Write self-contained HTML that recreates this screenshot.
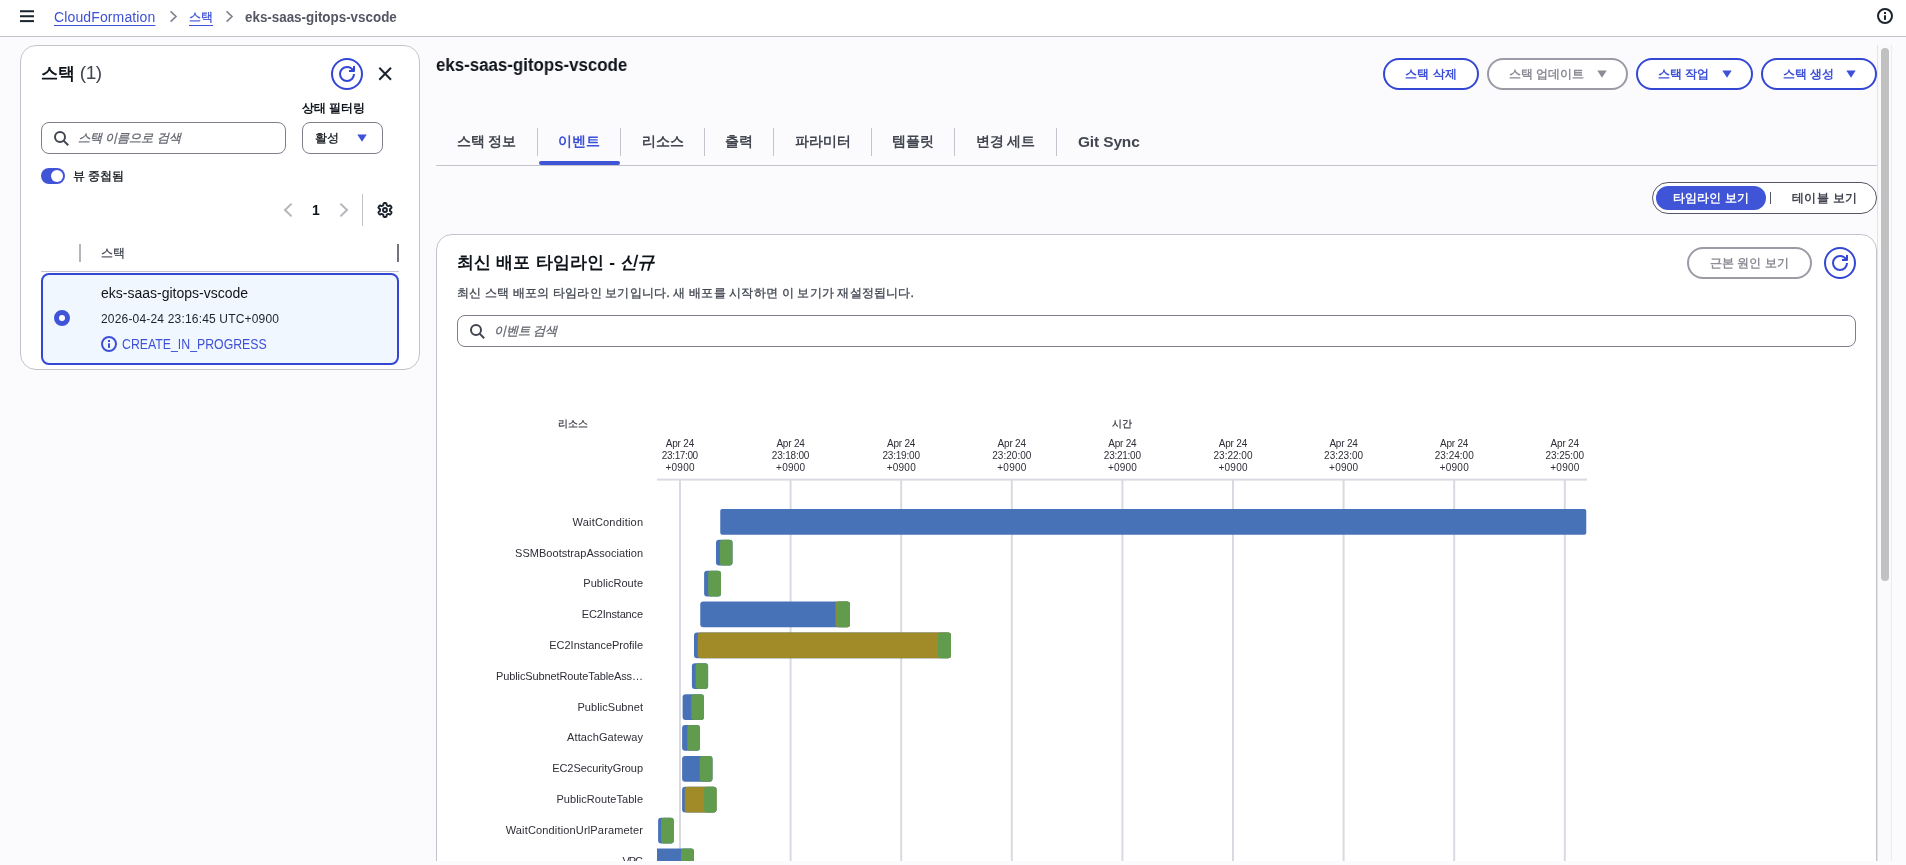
<!DOCTYPE html>
<html lang="ko">
<head>
<meta charset="utf-8">
<title>CloudFormation - eks-saas-gitops-vscode</title>
<style>
*{box-sizing:border-box;margin:0;padding:0}
html,body{width:1906px;height:865px;overflow:hidden}
body{position:relative;background:#fbfbfd;font-family:"Liberation Sans",sans-serif;font-size:14px;color:#0f141a;-webkit-font-smoothing:antialiased}
#root{position:absolute;left:0;top:0;width:1906px;height:865px;will-change:transform}
.abs{position:absolute}
.t{position:absolute;white-space:nowrap;line-height:20px}
svg{position:absolute;overflow:visible}
.blue{color:#3d51d8}
.b{font-weight:bold}
.sx{transform-origin:0 50%}
.k,.bt{font-size:12px}
.k,.k2,.ks{-webkit-text-stroke:0.3px currentColor}
.b.k{-webkit-text-stroke:0}
.k2{font-size:12.4px}

/* top bar */
#top{left:0;top:0;width:1906px;height:37px;background:#fff;border-bottom:1px solid #c3c3cc}
.crumb{font-size:14px;top:7px}
.crumb.link{color:#3d51d8;text-decoration:underline;text-underline-offset:3px;text-decoration-thickness:1px}

/* left panel */
#side{left:20px;top:45px;width:400px;height:325px;background:#fff;border:1px solid #c3c3cc;border-radius:16px}
.input{background:#fff;border:1px solid #7d7f8a;border-radius:8px;height:32px}
.ph{color:#656871;font-style:italic}
.iconbtn{border:2px solid #3347d4;border-radius:16px;width:32px;height:32px;background:#fff}

/* main */
.pill{height:32px;border-radius:16px;border:2px solid #3347d4;background:#fff;color:#3d51d8;font-weight:bold}
.pill.dis{border-color:#9b9ba5;color:#8c8c94}
.tab{position:absolute;top:131px;height:20px;line-height:20px;font-weight:bold;color:#424650;text-align:center;white-space:nowrap}
.tdiv{position:absolute;top:128px;width:1px;height:28px;background:#c3c3cc}
#card{left:436px;top:234px;width:1441px;height:660px;background:#fff;border:1px solid #c3c3cc;border-radius:16px}
</style>
</head>
<body>
<div id="root">

<!-- ===== top bar ===== -->
<div id="top" class="abs"></div>
<svg style="left:20px;top:10px" width="14" height="13" viewBox="0 0 14 13"><g fill="#1b232d"><rect x="0" y="0.25" width="14" height="2"/><rect x="0" y="5.25" width="14" height="2"/><rect x="0" y="10.1" width="14" height="2"/></g></svg>
<div class="t crumb link" style="left:54px;letter-spacing:0.13px">CloudFormation</div>
<svg style="left:168px;top:10px" width="12" height="13" viewBox="0 0 12 13"><path d="M2.6 1.4 L8 6.5 L2.6 11.6" fill="none" stroke="#7f828c" stroke-width="1.6"/></svg>
<div class="t crumb link ks" style="left:189px;top:6.5px;font-size:12px;text-underline-offset:3.5px">스택</div>
<svg style="left:224px;top:10px" width="12" height="13" viewBox="0 0 12 13"><path d="M2.6 1.4 L8 6.5 L2.6 11.6" fill="none" stroke="#7f828c" stroke-width="1.6"/></svg>
<div class="t crumb b sx" style="left:245px;color:#545763;transform:scaleX(0.956)">eks-saas-gitops-vscode</div>
<svg style="left:1877px;top:8px" width="16" height="16" viewBox="0 0 16 16"><circle cx="8" cy="8" r="7" fill="none" stroke="#1b232d" stroke-width="2"/><rect x="7" y="4" width="2" height="2" fill="#1b232d"/><rect x="7" y="7.3" width="2" height="4.6" fill="#1b232d"/></svg>

<!-- ===== left panel ===== -->
<div id="side" class="abs"></div>
<div class="t" style="left:41px;top:61px;line-height:24px;font-size:17.4px"><span class="b">스택</span> <span style="color:#424650;font-size:19px;letter-spacing:-0.5px">(1)</span></div>
<div class="abs iconbtn" style="left:331px;top:58px"></div>
<svg style="left:339px;top:66px" width="16" height="16" viewBox="0 0 16 16" fill="none" stroke="#3347d4" stroke-width="2" stroke-linejoin="round"><path d="M15 8c0 3.87-3.13 7-7 7s-7-3.13-7-7 3.13-7 7-7c2.79 0 5.2 1.63 6.33 4"/><path d="M15 0v5h-5"/></svg>
<svg style="left:377px;top:66px" width="16" height="16" viewBox="0 0 16 16" fill="none" stroke="#1b232d" stroke-width="2"><path d="M2.3 1.8 L14 13.7 M14 1.8 L2.3 13.7"/></svg>

<div class="t b k" style="left:302px;top:98px">상태 필터링</div>
<div class="abs input" style="left:41px;top:122px;width:245px"></div>
<svg style="left:54px;top:131px" width="16" height="16" viewBox="0 0 16 16" fill="none" stroke="#424650" stroke-width="2"><circle cx="6" cy="6" r="5"/><path d="M9.6 9.6 L14.2 14.2"/></svg>
<div class="t ph k2" style="left:78px;top:128px;font-size:12.3px">스택 이름으로 검색</div>
<div class="abs input" style="left:302px;top:122px;width:81px"></div>
<div class="t k" style="left:315px;top:128px">활성</div>
<svg style="left:357px;top:134px" width="10" height="8" viewBox="0 0 10 8"><path d="M0.3 0.4 H9.7 L5 7.8 Z" fill="#3d51d8"/></svg>

<div class="abs" style="left:41px;top:168px;width:24px;height:16px;border-radius:8px;background:#4054d7"></div>
<div class="abs" style="left:51px;top:170px;width:12px;height:12px;border-radius:6px;background:#fff"></div>
<div class="t k" style="left:73px;top:166px">뷰 중첩됨</div>

<svg style="left:283px;top:202px" width="10" height="16" viewBox="0 0 10 16" fill="none" stroke="#b4b4bb" stroke-width="2"><path d="M8.6 1.6 L2 8 L8.6 14.4"/></svg>
<div class="t b" style="left:312px;top:200px;color:#0f141a">1</div>
<svg style="left:339px;top:202px" width="10" height="16" viewBox="0 0 10 16" fill="none" stroke="#b4b4bb" stroke-width="2"><path d="M1.4 1.6 L8 8 L1.4 14.4"/></svg>
<div class="abs" style="left:362px;top:194px;width:1px;height:32px;background:#c3c3cc"></div>
<svg id="gear" style="left:377px;top:202px" width="16" height="16" viewBox="0 0 16 16" fill="none" stroke="#1b232d" stroke-width="1.9" stroke-linejoin="round"><path d="M13.00 8.00 L13.00 7.78 L12.98 7.56 L12.96 7.35 L12.94 7.13 L13.22 6.84 L13.80 6.45 L14.34 6.00 L14.56 5.61 L14.47 5.32 L14.34 5.04 L14.21 4.77 L14.06 4.50 L13.90 4.24 L13.73 3.98 L13.55 3.74 L13.35 3.51 L12.90 3.51 L12.24 3.76 L11.62 4.05 L11.22 4.16 L11.04 4.03 L10.87 3.90 L10.69 3.78 L10.50 3.67 L10.31 3.56 L10.11 3.47 L9.91 3.38 L9.72 3.29 L9.61 2.90 L9.55 2.20 L9.44 1.51 L9.21 1.12 L8.91 1.06 L8.61 1.03 L8.31 1.01 L8.00 1.00 L7.69 1.01 L7.39 1.03 L7.09 1.06 L6.79 1.12 L6.56 1.51 L6.45 2.20 L6.39 2.90 L6.28 3.29 L6.09 3.38 L5.89 3.47 L5.69 3.56 L5.50 3.67 L5.31 3.78 L5.13 3.90 L4.96 4.03 L4.78 4.16 L4.38 4.05 L3.76 3.76 L3.10 3.51 L2.65 3.51 L2.45 3.74 L2.27 3.98 L2.10 4.24 L1.94 4.50 L1.79 4.77 L1.66 5.04 L1.53 5.32 L1.44 5.61 L1.66 6.00 L2.20 6.45 L2.78 6.84 L3.06 7.13 L3.04 7.35 L3.02 7.56 L3.00 7.78 L3.00 8.00 L3.00 8.22 L3.02 8.44 L3.04 8.65 L3.06 8.87 L2.78 9.16 L2.20 9.55 L1.66 10.00 L1.44 10.39 L1.53 10.68 L1.66 10.96 L1.79 11.23 L1.94 11.50 L2.10 11.76 L2.27 12.02 L2.45 12.26 L2.65 12.49 L3.10 12.49 L3.76 12.24 L4.38 11.95 L4.78 11.84 L4.96 11.97 L5.13 12.10 L5.31 12.22 L5.50 12.33 L5.69 12.44 L5.89 12.53 L6.09 12.62 L6.28 12.71 L6.39 13.10 L6.45 13.80 L6.56 14.49 L6.79 14.88 L7.09 14.94 L7.39 14.97 L7.69 14.99 L8.00 15.00 L8.31 14.99 L8.61 14.97 L8.91 14.94 L9.21 14.88 L9.44 14.49 L9.55 13.80 L9.61 13.10 L9.72 12.71 L9.91 12.62 L10.11 12.53 L10.31 12.44 L10.50 12.33 L10.69 12.22 L10.87 12.10 L11.04 11.97 L11.22 11.84 L11.62 11.95 L12.24 12.24 L12.90 12.49 L13.35 12.49 L13.55 12.26 L13.73 12.02 L13.90 11.76 L14.06 11.50 L14.21 11.23 L14.34 10.96 L14.47 10.68 L14.56 10.39 L14.34 10.00 L13.80 9.55 L13.22 9.16 L12.94 8.87 L12.96 8.65 L12.98 8.44 L13.00 8.22 Z"/><circle cx="8" cy="8" r="2"/></svg>

<div class="abs" style="left:79px;top:244px;width:2px;height:18px;background:#b4b4bb"></div>
<div class="t k" style="left:101px;top:243px;color:#424650">스택</div>
<div class="abs" style="left:397px;top:244px;width:2px;height:18px;background:#72747e"></div>
<div class="abs" style="left:41px;top:271px;width:358px;height:1px;background:#c3c3cc"></div>
<div class="abs" style="left:41px;top:272.5px;width:358px;height:92px;border:2px solid #3347d4;border-radius:8px;background:#f1f7fe"></div>
<div class="abs" style="left:54px;top:310px;width:16px;height:16px;border-radius:8px;border:5px solid #4054d7;background:#fff"></div>
<div class="t" style="left:101px;top:283px">eks-saas-gitops-vscode</div>
<div class="t" style="left:101px;top:308.5px;font-size:12px;letter-spacing:0.18px;color:#1b232d">2026-04-24 23:16:45 UTC+0900</div>
<svg style="left:101px;top:336px" width="16" height="16" viewBox="0 0 16 16"><circle cx="8" cy="8" r="7" fill="none" stroke="#3d51d8" stroke-width="2"/><rect x="7" y="4" width="2" height="2" fill="#3d51d8"/><rect x="7" y="7.3" width="2" height="4.6" fill="#3d51d8"/></svg>
<div class="t blue sx" style="left:122px;top:334px;font-size:14px;transform:scaleX(0.879)">CREATE_IN_PROGRESS</div>


<!-- ===== main header ===== -->
<div class="t b sx" style="left:436px;top:52.8px;font-size:18px;line-height:24px;transform:scaleX(0.9375)">eks-saas-gitops-vscode</div>

<div class="abs pill" style="left:1383px;top:58px;width:96px"></div>
<div class="t b blue bt" style="left:1383px;top:64px;width:96px;text-align:center">스택 삭제</div>

<div class="abs pill dis" style="left:1487px;top:58px;width:141px"></div>
<div class="t b bt" style="left:1509px;top:64px;color:#8c8c94">스택 업데이트</div>
<svg style="left:1597px;top:70px" width="10" height="8" viewBox="0 0 10 8"><path d="M0.3 0.4 H9.7 L5 7.8 Z" fill="#8c8c94"/></svg>

<div class="abs pill" style="left:1636px;top:58px;width:117px"></div>
<div class="t b blue bt" style="left:1658px;top:64px">스택 작업</div>
<svg style="left:1722px;top:70px" width="10" height="8" viewBox="0 0 10 8"><path d="M0.3 0.4 H9.7 L5 7.8 Z" fill="#3d51d8"/></svg>

<div class="abs pill" style="left:1761px;top:58px;width:116px"></div>
<div class="t b blue bt" style="left:1783px;top:64px">스택 생성</div>
<svg style="left:1846px;top:70px" width="10" height="8" viewBox="0 0 10 8"><path d="M0.3 0.4 H9.7 L5 7.8 Z" fill="#3d51d8"/></svg>

<!-- ===== tabs ===== -->
<div class="abs" style="left:436px;top:165px;width:1441px;height:1px;background:#c3c3cc"></div>
<div class="tab" style="left:436px;width:101px">스택 정보</div>
<div class="tdiv" style="left:537px"></div>
<div class="tab" style="left:537px;width:83px;color:#3d51d8">이벤트</div>
<div class="abs" style="left:539px;top:161px;width:81px;height:4px;border-radius:2px;background:#4054d7"></div>
<div class="tdiv" style="left:620px"></div>
<div class="tab" style="left:621px;width:83px">리소스</div>
<div class="tdiv" style="left:704px"></div>
<div class="tab" style="left:705px;width:68px">출력</div>
<div class="tdiv" style="left:773px"></div>
<div class="tab" style="left:774px;width:97px">파라미터</div>
<div class="tdiv" style="left:871px"></div>
<div class="tab" style="left:872px;width:82px">템플릿</div>
<div class="tdiv" style="left:954px"></div>
<div class="tab" style="left:955px;width:101px">변경 세트</div>
<div class="tdiv" style="left:1056px"></div>
<div class="tab" style="left:1078px;top:132.3px;font-size:15.4px;letter-spacing:-0.1px">Git Sync</div>

<!-- ===== segmented control ===== -->
<div class="abs" style="left:1652px;top:182px;width:225px;height:32px;border:1px solid #545763;border-radius:16px;background:#fff"></div>
<div class="abs" style="left:1656px;top:186px;width:110px;height:24px;border-radius:12px;background:#4054d7"></div>
<div class="t b bt" style="left:1656px;top:188px;width:110px;text-align:center;color:#fff">타임라인 보기</div>
<div class="abs" style="left:1770px;top:192px;width:1px;height:12px;background:#545763"></div>
<div class="t b bt" style="left:1792px;top:188px;letter-spacing:0.3px;color:#424650">테이블 보기</div>

<!-- ===== card ===== -->
<div id="card" class="abs"></div>
<div class="t b" style="left:457px;top:250px;font-size:17.4px;letter-spacing:0.15px;line-height:24px">최신 배포 타임라인 - <i>신규</i></div>
<div class="t k2" style="left:457px;top:283px;font-size:12.4px;letter-spacing:0.17px;color:#424650">최신 스택 배포의 타임라인 보기입니다. 새 배포를 시작하면 이 보기가 재설정됩니다.</div>
<div class="abs pill dis" style="left:1687px;top:247px;width:125px"></div>
<div class="t b bt" style="left:1687px;top:253px;width:125px;text-align:center;color:#8c8c94">근본 원인 보기</div>
<div class="abs iconbtn" style="left:1824px;top:247px"></div>
<svg style="left:1832px;top:255px" width="16" height="16" viewBox="0 0 16 16" fill="none" stroke="#3347d4" stroke-width="2" stroke-linejoin="round"><path d="M15 8c0 3.87-3.13 7-7 7s-7-3.13-7-7 3.13-7 7-7c2.790 0 5.2 1.63 6.33 4"/><path d="M15 0v5h-5"/></svg>
<div class="abs input" style="left:457px;top:315px;width:1399px"></div>
<svg style="left:470px;top:324px" width="16" height="16" viewBox="0 0 16 16" fill="none" stroke="#424650" stroke-width="2"><circle cx="6" cy="6" r="5"/><path d="M9.6 9.6 L14.2 14.2"/></svg>
<div class="t ph k2" style="left:494px;top:321px">이벤트 검색</div>

<!-- CHART-START -->
<svg id="chart" style="left:436px;top:400px" width="1200" height="461" viewBox="436 400 1200 461">
<defs><clipPath id="plot"><rect x="657" y="480" width="940" height="381"/></clipPath><clipPath id="lab"><rect x="436" y="480" width="220" height="381"/></clipPath></defs>
<g fill="#d9d9e2">
<rect x="679.00" y="479" width="2" height="382"/>
<rect x="789.60" y="479" width="2" height="382"/>
<rect x="900.20" y="479" width="2" height="382"/>
<rect x="1010.80" y="479" width="2" height="382"/>
<rect x="1121.40" y="479" width="2" height="382"/>
<rect x="1232.00" y="479" width="2" height="382"/>
<rect x="1342.60" y="479" width="2" height="382"/>
<rect x="1453.20" y="479" width="2" height="382"/>
<rect x="1563.80" y="479" width="2" height="382"/>
<rect x="657" y="478.6" width="930" height="2"/>
</g>
<g font-family="Liberation Sans, sans-serif" font-size="10" fill="#2e2e38" text-anchor="middle">
<text x="680.0" y="446.7" textLength="28.4">Apr 24</text><text x="680.0" y="458.7" textLength="36.3">23:17:00</text><text x="680.0" y="470.6" textLength="29">+0900</text>
<text x="790.6" y="446.7" textLength="28.4">Apr 24</text><text x="790.6" y="458.7" textLength="37.6">23:18:00</text><text x="790.6" y="470.6" textLength="29">+0900</text>
<text x="901.2" y="446.7" textLength="28.4">Apr 24</text><text x="901.2" y="458.7" textLength="37.5">23:19:00</text><text x="901.2" y="470.6" textLength="29">+0900</text>
<text x="1011.8" y="446.7" textLength="28.4">Apr 24</text><text x="1011.8" y="458.7" textLength="39">23:20:00</text><text x="1011.8" y="470.6" textLength="29">+0900</text>
<text x="1122.4" y="446.7" textLength="28.4">Apr 24</text><text x="1122.4" y="458.7" textLength="37.1">23:21:00</text><text x="1122.4" y="470.6" textLength="29">+0900</text>
<text x="1233.0" y="446.7" textLength="28.4">Apr 24</text><text x="1233.0" y="458.7" textLength="39">23:22:00</text><text x="1233.0" y="470.6" textLength="29">+0900</text>
<text x="1343.6" y="446.7" textLength="28.4">Apr 24</text><text x="1343.6" y="458.7" textLength="39">23:23:00</text><text x="1343.6" y="470.6" textLength="29">+0900</text>
<text x="1454.2" y="446.7" textLength="28.4">Apr 24</text><text x="1454.2" y="458.7" textLength="39.1">23:24:00</text><text x="1454.2" y="470.6" textLength="29">+0900</text>
<text x="1564.8" y="446.7" textLength="28.4">Apr 24</text><text x="1564.8" y="458.7" textLength="38.4">23:25:00</text><text x="1564.8" y="470.6" textLength="29">+0900</text>
</g>
<g font-family="Liberation Sans, sans-serif" font-size="10.4" fill="#2e2e38" stroke="#2e2e38" stroke-width="0.2"><text x="557.5" y="427.4">리소스</text><text x="1121.7" y="427.4" text-anchor="middle">시간</text></g>
<g clip-path="url(#plot)">
<rect x="720.25" y="509.00" width="866.00" height="25.7" rx="2" fill="#4872b8"/>
<rect x="716.00" y="539.87" width="16.50" height="25.7" rx="3" fill="#4872b8"/>
<rect x="720.00" y="539.87" width="12.50" height="25.7" rx="3" fill="#619b4e"/>
<rect x="704.10" y="570.74" width="16.90" height="25.7" rx="3" fill="#4872b8"/>
<rect x="708.10" y="570.74" width="12.90" height="25.7" rx="3" fill="#619b4e"/>
<rect x="700.25" y="601.61" width="149.75" height="25.7" rx="3" fill="#4872b8"/>
<rect x="835.60" y="601.61" width="14.40" height="25.7" rx="3" fill="#a08b28"/>
<rect x="836.50" y="601.61" width="13.50" height="25.7" rx="3" fill="#619b4e"/>
<rect x="694.00" y="632.48" width="257.00" height="25.7" rx="3" fill="#4872b8"/>
<rect x="697.75" y="632.48" width="253.25" height="25.7" rx="3" fill="#a08b28"/>
<rect x="938.00" y="632.48" width="13.00" height="25.7" rx="3" fill="#619b4e"/>
<rect x="691.90" y="663.35" width="16.20" height="25.7" rx="3" fill="#4872b8"/>
<rect x="695.60" y="663.35" width="12.50" height="25.7" rx="3" fill="#619b4e"/>
<rect x="682.60" y="694.22" width="21.40" height="25.7" rx="3" fill="#4872b8"/>
<rect x="691.25" y="694.22" width="12.75" height="25.7" rx="3" fill="#619b4e"/>
<rect x="682.10" y="725.09" width="17.90" height="25.7" rx="3" fill="#4872b8"/>
<rect x="687.25" y="725.09" width="12.75" height="25.7" rx="3" fill="#619b4e"/>
<rect x="682.10" y="755.96" width="30.40" height="25.7" rx="3" fill="#4872b8"/>
<rect x="699.75" y="755.96" width="12.75" height="25.7" rx="3" fill="#619b4e"/>
<rect x="682.10" y="786.83" width="34.40" height="25.7" rx="3" fill="#4872b8"/>
<rect x="684.75" y="786.83" width="31.75" height="25.7" rx="3" fill="#a08b28"/>
<rect x="704.00" y="786.83" width="12.50" height="25.7" rx="3" fill="#619b4e"/>
<rect x="658.10" y="817.70" width="15.65" height="25.7" rx="3" fill="#4872b8"/>
<rect x="661.00" y="817.70" width="12.75" height="25.7" rx="3" fill="#619b4e"/>
<rect x="653.00" y="848.57" width="41.00" height="25.7" rx="3" fill="#4872b8"/>
<rect x="681.00" y="848.57" width="13.00" height="25.7" rx="3" fill="#619b4e"/>
</g>
<g clip-path="url(#lab)" font-family="Liberation Sans, sans-serif" font-size="11" fill="#2e2e38" text-anchor="end">
<text x="643" y="525.7" textLength="70.5" lengthAdjust="spacing">WaitCondition</text>
<text x="643" y="556.5" textLength="128" lengthAdjust="spacing">SSMBootstrapAssociation</text>
<text x="643" y="587.3" textLength="59.75" lengthAdjust="spacing">PublicRoute</text>
<text x="643" y="618.1" textLength="61.2" lengthAdjust="spacing">EC2Instance</text>
<text x="643" y="648.9" textLength="93.7" lengthAdjust="spacing">EC2InstanceProfile</text>
<text x="643" y="679.7" textLength="147" lengthAdjust="spacing">PublicSubnetRouteTableAss…</text>
<text x="643" y="710.5" textLength="65.6" lengthAdjust="spacing">PublicSubnet</text>
<text x="643" y="741.3" textLength="76" lengthAdjust="spacing">AttachGateway</text>
<text x="643" y="772.1" textLength="90.85" lengthAdjust="spacing">EC2SecurityGroup</text>
<text x="643" y="802.9" textLength="86.6" lengthAdjust="spacing">PublicRouteTable</text>
<text x="643" y="833.7" textLength="137.3" lengthAdjust="spacing">WaitConditionUrlParameter</text>
<text x="643" y="864.5" textLength="20.4" lengthAdjust="spacing">VPC</text>
</g>
</svg>
<!-- CHART-END -->

<!-- ===== scrollbar + bottom band ===== -->
<div class="abs" style="left:1877px;top:45px;width:15px;height:816px;background:#fafafa;border-left:1px solid #e4e4e8;border-right:1px solid #ececee"></div>
<div class="abs" style="left:1881px;top:48px;width:8px;height:533px;border-radius:4px;background:#c1c1c1"></div>
<div class="abs" style="left:0;top:861px;width:1906px;height:4px;background:#fbfbfd"></div>


</div>
</body>
</html>
